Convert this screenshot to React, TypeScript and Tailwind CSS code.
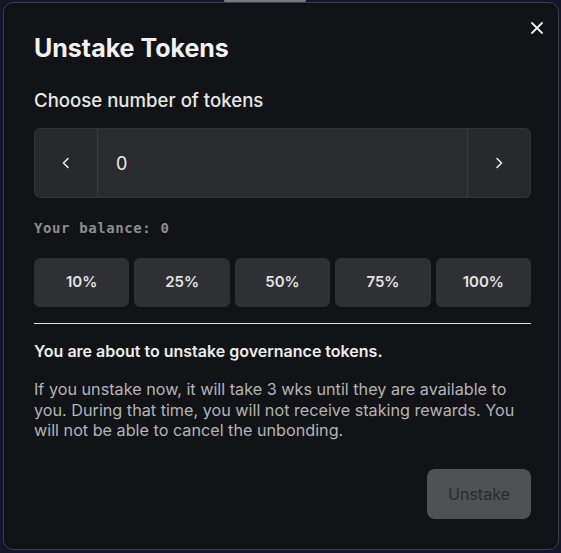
import React, { useState } from 'react';

const percents = ['10%', '25%', '50%', '75%', '100%'];

const App: React.FC = () => {
  const [amount] = useState('0');

  return (
    <div className="relative min-h-screen bg-[#15152b] pl-[3px] pr-[2px] pt-[2px] font-['Inter',sans-serif]">
      <div className="absolute left-[224px] top-0 h-[3px] w-[82px] rounded-b-sm bg-[#7b7b80]" />
      <div className="relative h-[548px] rounded-[10px] border border-[#3d3d4c] bg-[#121316] pl-[30px] pr-[27px] pt-[29px]">
        <button className="absolute right-[15px] top-[19px] text-[#ededed]">
          <svg width="12" height="12" viewBox="0 0 12 12" fill="none" stroke="currentColor" strokeWidth="1.8" strokeLinecap="round">
            <path d="M1 1l10 10M11 1L1 11" />
          </svg>
        </button>

        <h1 className="text-[25px] font-bold leading-8 text-[#f2f2f2]">Unstake Tokens</h1>
        <h2 className="mt-[22px] text-[18.6px] font-medium leading-7 text-[#e6e6e6]">Choose number of tokens</h2>

        <div className="mt-[14px] flex h-[70px] overflow-hidden rounded-md border border-[#323337] bg-[#2a2b2e]">
          <button className="flex w-[63px] items-center justify-center border-r border-[#3a3b3f] bg-[#28292c] text-[#e8e8e8]">
            <svg width="16" height="16" viewBox="0 0 16 16" fill="none" stroke="currentColor" strokeWidth="1.6" strokeLinecap="round" strokeLinejoin="round">
              <path d="M10 3.5L5.5 8l4.5 4.5" />
            </svg>
          </button>
          <div className="flex flex-1 items-center pl-[18px] text-[18px] text-[#ececec]">{amount}</div>
          <button className="flex w-[63px] items-center justify-center border-l border-[#3a3b3f] bg-[#28292c] text-[#e8e8e8]">
            <svg width="16" height="16" viewBox="0 0 16 16" fill="none" stroke="currentColor" strokeWidth="1.6" strokeLinecap="round" strokeLinejoin="round">
              <path d="M6 3.5L10.5 8 6 12.5" />
            </svg>
          </button>
        </div>

        <p className="mt-[20px] font-['DejaVu_Sans_Mono',monospace] text-[14px] font-bold leading-5 tracking-[0.6px] text-[#8c8c8e]">
          Your balance: 0
        </p>

        <div className="mt-[20px] grid grid-cols-5 gap-[5px]">
          {percents.map((p) => (
            <button key={p} className="h-[49px] rounded-md bg-[#2f3033] text-[15px] font-semibold text-[#e2e2e2]">
              {p}
            </button>
          ))}
        </div>

        <div className="mt-[16px] h-px bg-[#dcdcdc]" />

        <p className="mt-[17px] text-[16px] font-semibold leading-5 text-[#ececec]">
          You are about to unstake governance tokens.
        </p>
        <p className="mt-[18px] text-[16.2px] leading-[20.5px] text-[#b4b4b6]">
          If you unstake now, it will take 3 wks until they are available to you. During that time, you will not
          receive staking rewards. You will not be able to cancel the unbonding.
        </p>

        <div className="mt-[28px] flex justify-end">
          <button className="h-[50px] w-[104px] rounded-lg bg-[#505153] text-[16px] text-[#2b2c2e]">Unstake</button>
        </div>
      </div>
    </div>
  );
};

export default App;
